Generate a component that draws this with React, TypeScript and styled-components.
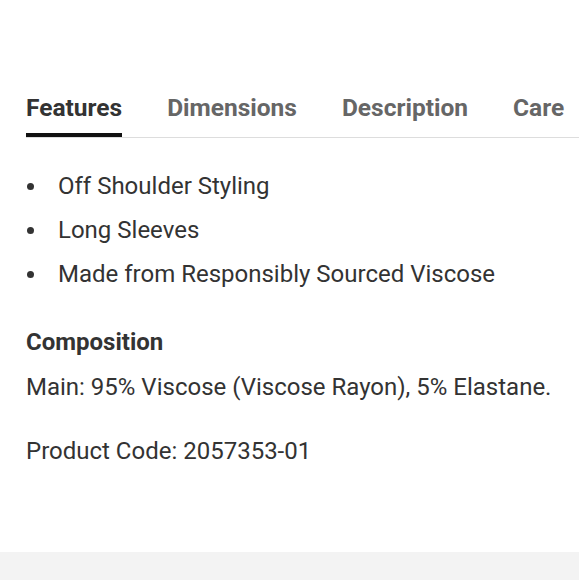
import React from "react";
import styled, { createGlobalStyle } from "styled-components";

const Global = createGlobalStyle`
  html, body { margin: 0; padding: 0; background: #fff; }
  body { font-family: Roboto, "Liberation Sans", sans-serif; width: 579px; height: 580px; overflow: hidden; }
`;

const Page = styled.div`
  height: 580px;
  display: flex;
  flex-direction: column;
`;

const Content = styled.div`
  height: 552px;
  padding: 93px 0 0 26px;
  box-sizing: border-box;
  color: #333;
`;

const Footer = styled.div`
  flex: 1;
  background: #f3f3f3;
`;

const TabBar = styled.div`
  display: flex;
  gap: 45px;
  border-bottom: 1px solid #ddd;
  white-space: nowrap;
  overflow: hidden;
`;

const Tab = styled.div<{ $active?: boolean }>`
  font-size: 24.5px;
  font-weight: 700;
  color: ${(p) => (p.$active ? "#333" : "#666")};
  line-height: 30px;
  padding-bottom: 10px;
  border-bottom: 4px solid ${(p) => (p.$active ? "#111" : "transparent")};
`;

const List = styled.ul`
  list-style: none;
  margin: 33px 0 0;
  padding: 0;
  display: flex;
  flex-direction: column;
  gap: 14px;
`;

const Item = styled.li`
  display: flex;
  align-items: center;
  font-size: 24px;
  line-height: 30px;
`;

const Bullet = styled.span`
  width: 7px;
  height: 7px;
  border-radius: 50%;
  background: #333;
  margin: 0 24px 0 1px;
  flex: none;
`;

const Heading = styled.div`
  margin-top: 38px;
  font-size: 24px;
  font-weight: 700;
  line-height: 30px;
`;

const Para = styled.div<{ $gap: number }>`
  margin-top: ${(p) => p.$gap}px;
  font-size: 24px;
  line-height: 30px;
`;

export default function App() {
  return (
    <Page>
      <Global />
      <Content>
        <TabBar>
          <Tab $active>Features</Tab>
          <Tab>Dimensions</Tab>
          <Tab>Description</Tab>
          <Tab>Care</Tab>
        </TabBar>
        <List>
          {["Off Shoulder Styling", "Long Sleeves", "Made from Responsibly Sourced Viscose"].map((t) => (
            <Item key={t}>
              <Bullet />
              {t}
            </Item>
          ))}
        </List>
        <Heading>Composition</Heading>
        <Para $gap={15}>Main: 95% Viscose (Viscose Rayon), 5% Elastane.</Para>
        <Para $gap={34}>Product Code: 2057353-01</Para>
      </Content>
      <Footer />
    </Page>
  );
}
